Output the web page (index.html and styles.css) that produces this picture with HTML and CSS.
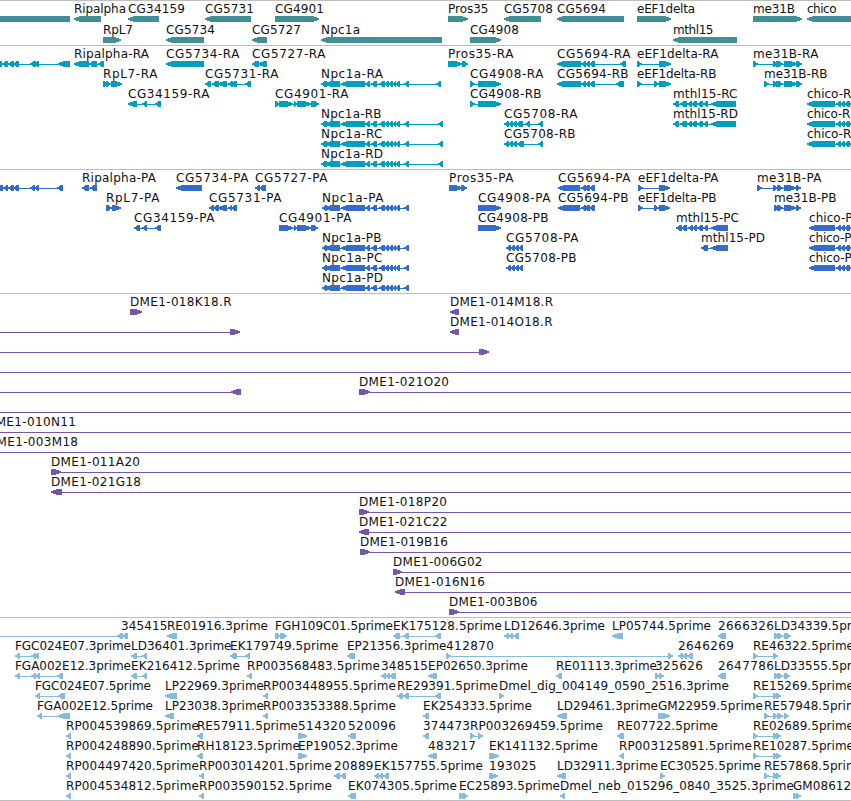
FILE: index.html
```
<!DOCTYPE html>
<html>
<head>
<meta charset="utf-8">
<title>Tracks</title>
<link rel="stylesheet" href="styles.css">
</head>
<body>

<div class="browser">
	<div class="track genes" id="genes"></div>
	<div class="track transcripts" id="transcripts"></div>
	<div class="track proteins" id="proteins"></div>
	<div class="track clones" id="clones"></div>
	<div class="track ests" id="ests"></div>
</div>

<script src="tracks.js"></script>
</body>
</html>
```
FILE: styles.css
```
body {
	margin: 0;
	background-color: #fff;
	overflow: hidden;
}

.browser {
	width: 851px;
	overflow: hidden;
	border-bottom: 1px solid #bdbdbd;
}

.track {
	border-top: 1px solid #bdbdbd;
	padding: 1px 0 2px;
}

.row {
	display: block;
	width: 851px;
	height: 20px;
	overflow: visible;
}

.row text {
	font-family: "DejaVu Sans", sans-serif;
	font-size: 12px;
	fill: #111;
}

.row rect { shape-rendering: crispEdges; }

.genes { fill: #408f94; padding-bottom: 1px; }
.genes .row { height: 21px; }
.transcripts { fill: #009fbf; }
.proteins { fill: #326dcd; }
.clones { fill: #7657a7; }
.ests { fill: #87bbdd; padding-bottom: 1px; }
```
FILE: tracks.js
```
// feature: [label, label start, label end, strand, [exon start, exon end, ...]]

var npcR = [321,327, 325,340, 341,365, 365,370, 371,377, 379,385, 384,389, 388,393, 392,396, 395,400, 404,409];
var npcP = [322,327, 325,340, 341,365, 365,370, 371,377, 379,385, 384,389, 388,393, 392,396, 395,400, 404,409];
var mthR = [673,679, 680,687, 687,692, 691,697, 697,703, 703,708, 711,736];
var chicoR = [807,835, 836,841, 840,845, 844,850, 849,856];
var chicoP = [809,835, 836,841, 840,845, 844,850, 849,856];

var tracks = {

genes: [
	[["",0,0,"",[-10,70]], ["Ripalpha",74,126,"L",[74,101]], ["CG34159",128,185,"L",[128,159]],
	 ["CG5731",205,254,"L",[205,251]], ["CG4901",275,324,"R",[275,319]], ["Pros35",448,488.5,"R",[448,468]],
	 ["CG5708",504,553,"L",[504,541]], ["CG5694",557,606,"L",[557,624]], ["eEF1delta",637,695,"R",[637,671]],
	 ["me31B",753,795,"R",[753,802]], ["chico",807,836.5,"L",[807,870]]],
	[["RpL7",103,133,"R",[103,121]], ["CG5734",166,215,"L",[166,204]], ["CG5727",252,301,"L",[252,267]],
	 ["Npc1a",321,360,"L",[321,442]], ["CG4908",470,519,"R",[470,501]], ["mthl15",673,713.5,"L",[673,737]]]
],

transcripts: [
	[["",0,0,"L",[-5,2, 2,8, 8,14, 13,19, 30,36, 34,39, 58,70]], ["Ripalpha-RA",74,149,"L",[74,89, 89,97, 98,104]],
	 ["CG5734-RA",166,239.5,"L",[166,204]], ["CG5727-RA",252,325.5,"L",[252,259, 258,267]],
	 ["Pros35-RA",448,513.5,"R",[448,462, 462,468]], ["CG5694-RA",557,630.5,"L",[557,581, 581,586, 585,590, 589,595, 620,626]],
	 ["eEF1delta-RA",637,718.5,"R",[637,642, 659,671]], ["me31B-RA",753,818.5,"R",[753,758, 773,778, 776,783, 784,797, 796,802]]],
	[["RpL7-RA",103,157.5,"R",[103,108, 106,111, 111,122]], ["CG5731-RA",205,278.5,"L",[205,211, 212,219, 218,227, 228,233, 231,237, 245,251]],
	 ["Npc1a-RA",321,383,"L",npcR.concat([436,441])], ["CG4908-RA",470,543.5,"R",[470,475, 478,501]],
	 ["CG5694-RB",557,628.5,"L",[557,581, 581,586, 585,590, 589,595, 616,624]],
	 ["eEF1delta-RB",637,716.5,"R",[637,642, 654,659, 659,671]], ["me31B-RB",764,827.5,"R",[764,769, 773,778, 776,783, 784,797, 796,802]]],
	[["CG34159-RA",128,209.5,"L",[128,137, 142,147, 155,161]], ["CG4901-RA",275,348.5,"R",[275,280, 279,293, 294,298, 297,311, 311,319]],
	 ["CG4908-RB",470,541.5,"R",[470,475, 478,501]], ["mthl15-RC",673,737.5,"L",mthR], ["chico-RA",807,859,"L",chicoR]],
	[["Npc1a-RB",321,381.5,"L",npcR.concat([438,443])], ["CG5708-RA",504,577.5,"L",[504,509, 508,513, 512,517, 516,523, 525,530, 538,543]],
	 ["mthl15-RD",673,738,"L",mthR], ["chico-RB",807,858.5,"L",chicoR]],
	[["Npc1a-RC",321,382.5,"L",npcR.concat([438,443])], ["CG5708-RB",504,575.5,"L",[504,509, 508,513, 512,517, 517,524, 538,543]],
	 ["chico-RC",807,859,"L",chicoR]],
	[["Npc1a-RD",321,383,"L",npcR.concat([438,443])]]
],

proteins: [
	[["",0,0,"L",[-4,3, 3,8, 8,14, 13,19, 30,35, 34,39, 57,63]], ["Ripalpha-PA",82,156,"L",[82,89, 90,97]],
	 ["CG5734-PA",176,248.5,"L",[176,202]], ["CG5727-PA",255,327.5,"L",[255,260, 259,266]],
	 ["Pros35-PA",449,513.5,"R",[449,462, 461,467]], ["CG5694-PA",558,630.5,"L",[558,580, 581,586, 584,590, 589,595]],
	 ["eEF1delta-PA",638,718.5,"R",[638,643, 659,670]], ["me31B-PA",757,821.5,"R",[757,762, 773,778, 777,783, 784,796, 796,801]]],
	[["RpL7-PA",106,159.5,"R",[106,112, 112,121]], ["CG5731-PA",209,281.5,"L",[209,214, 213,219, 218,227, 228,232, 231,237]],
	 ["Npc1a-PA",322,383.5,"L",npcP], ["CG4908-PA",478,550.5,"R",[478,501]],
	 ["CG5694-PB",558,628.5,"L",[558,580, 581,586, 584,590, 589,595]], ["eEF1delta-PB",638,716.5,"R",[638,643, 654,659, 659,670]],
	 ["me31B-PB",774,836.5,"R",[774,779, 777,783, 784,796, 796,801]]],
	[["CG34159-PA",134,214.5,"L",[134,140, 142,147, 155,161]], ["CG4901-PA",279,351.5,"R",[279,293, 294,298, 297,311, 311,318]],
	 ["CG4908-PB",478,548.5,"R",[478,501]], ["mthl15-PC",676,739,"L",[676,682, 681,687, 688,693, 692,697, 697,703, 703,708, 711,728]],
	 ["chico-PA",809,860,"L",chicoP]],
	[["Npc1a-PB",322,381.5,"L",npcP], ["CG5708-PA",506,578.5,"L",[506,511, 510,515, 514,519, 518,523]],
	 ["mthl15-PD",701,765,"L",[701,708, 711,728]], ["chico-PB",809,859.5,"L",chicoP]],
	[["Npc1a-PC",322,382.5,"L",npcP], ["CG5708-PB",506,576.5,"L",[506,511, 510,515, 514,519, 518,523]],
	 ["chico-PC",809,860,"L",chicoP]],
	[["Npc1a-PD",322,383,"L",npcP]]
],

clones: [
	[["DME1-018K18.R",130,231.5,"R",[130,142]], ["DME1-014M18.R",450,553,"L",[450,459]]],
	[["",0,0,"R",[-20,-10, 230,240]], ["DME1-014O18.R",450,552.5,"L",[450,459]]],
	[["",0,0,"R",[-20,-10, 479,489]]],
	[["",0,0,"R",[-20,-10, 900,910]]],
	[["",0,0,"L",[-20,-10, 231,241]], ["DME1-021O20",359,449,"R",[359,370, 900,910]]],
	[["",0,0,"R",[-20,-10, 900,910]]],
	[["DME1-010N11",-14,76,"R",[-20,-10, 900,910]]],
	[["DME1-003M18",-13,78,"R",[-20,-10, 900,910]]],
	[["DME1-011A20",51,140,"R",[51,61, 900,910]]],
	[["DME1-021G18",51,141,"L",[51,62, 900,910]]],
	[["DME1-018P20",359,447,"R",[359,369, 900,910]]],
	[["DME1-021C22",359,447.5,"L",[359,369, 900,910]]],
	[["DME1-019B16",360,448,"R",[360,370, 900,910]]],
	[["DME1-006G02",393,482.5,"R",[393,402, 900,910]]],
	[["DME1-016N16",395,485,"L",[395,405, 900,910]]],
	[["DME1-003B06",449,537.5,"R",[449,459, 900,910]]]
],

ests: [
	[["345415",121,167.5,"L",[-20,-10, 117,123, 122,128]], ["RE01916.3prime",167,268,"L",[167,177]],
	 ["FGH109C01.5prime",275,393,"R",[275,281, 280,287]], ["EK175128.5prime",393,502,"L",[393,400, 403,409, 435,441]],
	 ["LD12646.3prime",504,605,"L",[504,509, 508,513, 513,519]], ["LP05744.5prime",612,711,"L",[612,623]],
	 ["2666326",718,774,"L",[718,726]], ["LD34339.5prime",774,874,"R",[774,779, 777,783, 784,791]]],
	[["FGC024E07.3prime",15,131,"L",[15,20, 31,36, 34,39]], ["LD36401.3prime",131,231.5,"L",[131,137, 142,147]],
	 ["EK179749.5prime",230,338.5,"L",[230,237, 245,250]], ["EP21356.3prime",347,446.5,"L",[347,355]],
	 ["412870",446,494,"R",[446,451, 668,673]], ["2646269",678,734,"L",[678,683, 682,687, 687,693]],
	 ["RE46322.5prime",753,854,"R",[753,758, 773,778]]],
	[["FGA002E12.3prime",15,131,"L",[15,20, 31,36, 35,40, 57,63]], ["EK216412.5prime",131,240,"L",[131,137, 142,147]],
	 ["RP003568483.5prime",247,380,"L",[247,252]], ["348515",381,428,"L",[381,386, 385,390, 389,396]],
	 ["EP02650.3prime",428,528,"L",[428,437]], ["RE01113.3prime",556,657,"L",[556,562]],
	 ["325626",655,703,"R",[655,660, 659,664]], ["2647786",718,774,"L",[718,726]],
	 ["LD33555.5prime",774,874,"R",[774,779, 777,783, 784,790]]],
	[["FGC024E07.5prime",35,151,"L",[35,40, 58,65]], ["LP22969.3prime",165,264,"L",[165,177]],
	 ["RP003448955.5prime",263,396,"L",[263,268]], ["RE29391.5prime",397,498,"L",[397,403, 403,409, 435,441]],
	 ["Dmel_dig_004149_0590_2516.3prime",499,729,"R",[499,504]], ["RE15269.5prime",753,854,"R",[753,758, 773,778, 776,781]]],
	[["FGA002E12.5prime",37,153,"L",[37,42, 58,70]], ["LP23038.3prime",165,264,"L",[165,174]],
	 ["RP003353388.5prime",263,396,"L",[263,268]], ["EK254333.5prime",423,532,"L",[423,429]],
	 ["LD29461.3prime",557,658,"L",[557,567]], ["GM22959.5prime",658,763,"R",[658,670]],
	 ["RE57948.5prime",764,865,"R",[764,769, 773,778, 777,783, 784,789]]],
	[["RP004539869.5prime",66,199,"L",[66,71]], ["RE57911.5prime",197,298,"L",[197,203]],
	 ["514320",298,346,"R",[298,307]], ["520096",348,396,"L",[348,356]], ["374473",423,470,"L",[423,429]],
	 ["RP003269459.5prime",470,603,"R",[470,475, 478,483]], ["RE07722.5prime",617,718,"L",[617,624]],
	 ["RE02689.5prime",753,854,"R",[753,758, 773,778, 776,781]]],
	[["RP004248890.5prime",66,199,"L",[66,71]], ["RH18123.5prime",197,300,"L",[197,203]],
	 ["EP19052.3prime",298,398,"R",[298,307]], ["483217",428,476,"L",[428,437]],
	 ["EK141132.5prime",489,598,"R",[489,499]], ["RP003125891.5prime",619,752,"L",[619,624]],
	 ["RE10287.5prime",753,854,"R",[753,758, 773,778, 776,781]]],
	[["RP004497420.5prime",66,199,"L",[66,71]], ["RP003014201.5prime",199,332,"L",[199,204]],
	 ["20889",334,373.5,"L",[334,340, 340,346]], ["EK157755.5prime",374,483,"L",[374,379, 378,383, 383,389]],
	 ["193025",489,536.5,"R",[489,498]], ["LD32911.3prime",557,658,"L",[557,566]],
	 ["EC30525.5prime",660,761,"R",[660,665]], ["RE57868.5prime",764,865,"R",[764,769, 773,778, 776,781]]],
	[["RP004534812.5prime",66,199,"L",[66,71]], ["RP003590152.5prime",199,332,"L",[199,204]],
	 ["EK074305.5prime",348,457,"L",[348,356]], ["EC25893.5prime",459,560,"R",[459,464, 462,468]],
	 ["Dmel_neb_015296_0840_3525.3prime",560,794,"L",[560,565]], ["GM08612.5prime",793,898,"R",[793,798, 796,801]]]
]

};

// arrow head is stepped, two pixel rows narrower each time
function exon(a, b, strand) {
	if (!strand)
		return '<rect x="' + a + '" y="14" width="' + (b - a) + '" height="6"/>';
	var cuts = b - a > 8 ? [5, 2, 0] : [3, 2, 0];
	var out = "";
	for (var k = 0; k < 3; k++) {
		var x = strand == "L" ? a + cuts[k] : a;
		out += '<rect x="' + x + '" y="' + (14 + k) + '" width="' + (b - a - cuts[k]) + '" height="' + (6 - 2 * k) + '"/>';
	}
	return out;
}

function drawRow(features) {
	var out = '<svg class="row">';
	for (var i = 0; i < features.length; i++) {
		var f = features[i];
		var ex = f[4];
		var last = ex[ex.length - 1];
		out += '<rect x="' + (ex[0] + 1) + '" y="17" width="' + (last - ex[0] - 2) + '" height="1"/>';
		for (var j = 0; j < ex.length; j += 2)
			out += exon(ex[j], ex[j+1], f[3]);
		if (f[0])
			out += '<text x="' + f[1] + '" y="11" textLength="' + (f[2] - f[1]) + '">' + f[0] + '</text>';
	}
	return out + '</svg>';
}

for (var id in tracks) {
	document.getElementById(id).innerHTML = tracks[id].map(drawRow).join("");
}
```
